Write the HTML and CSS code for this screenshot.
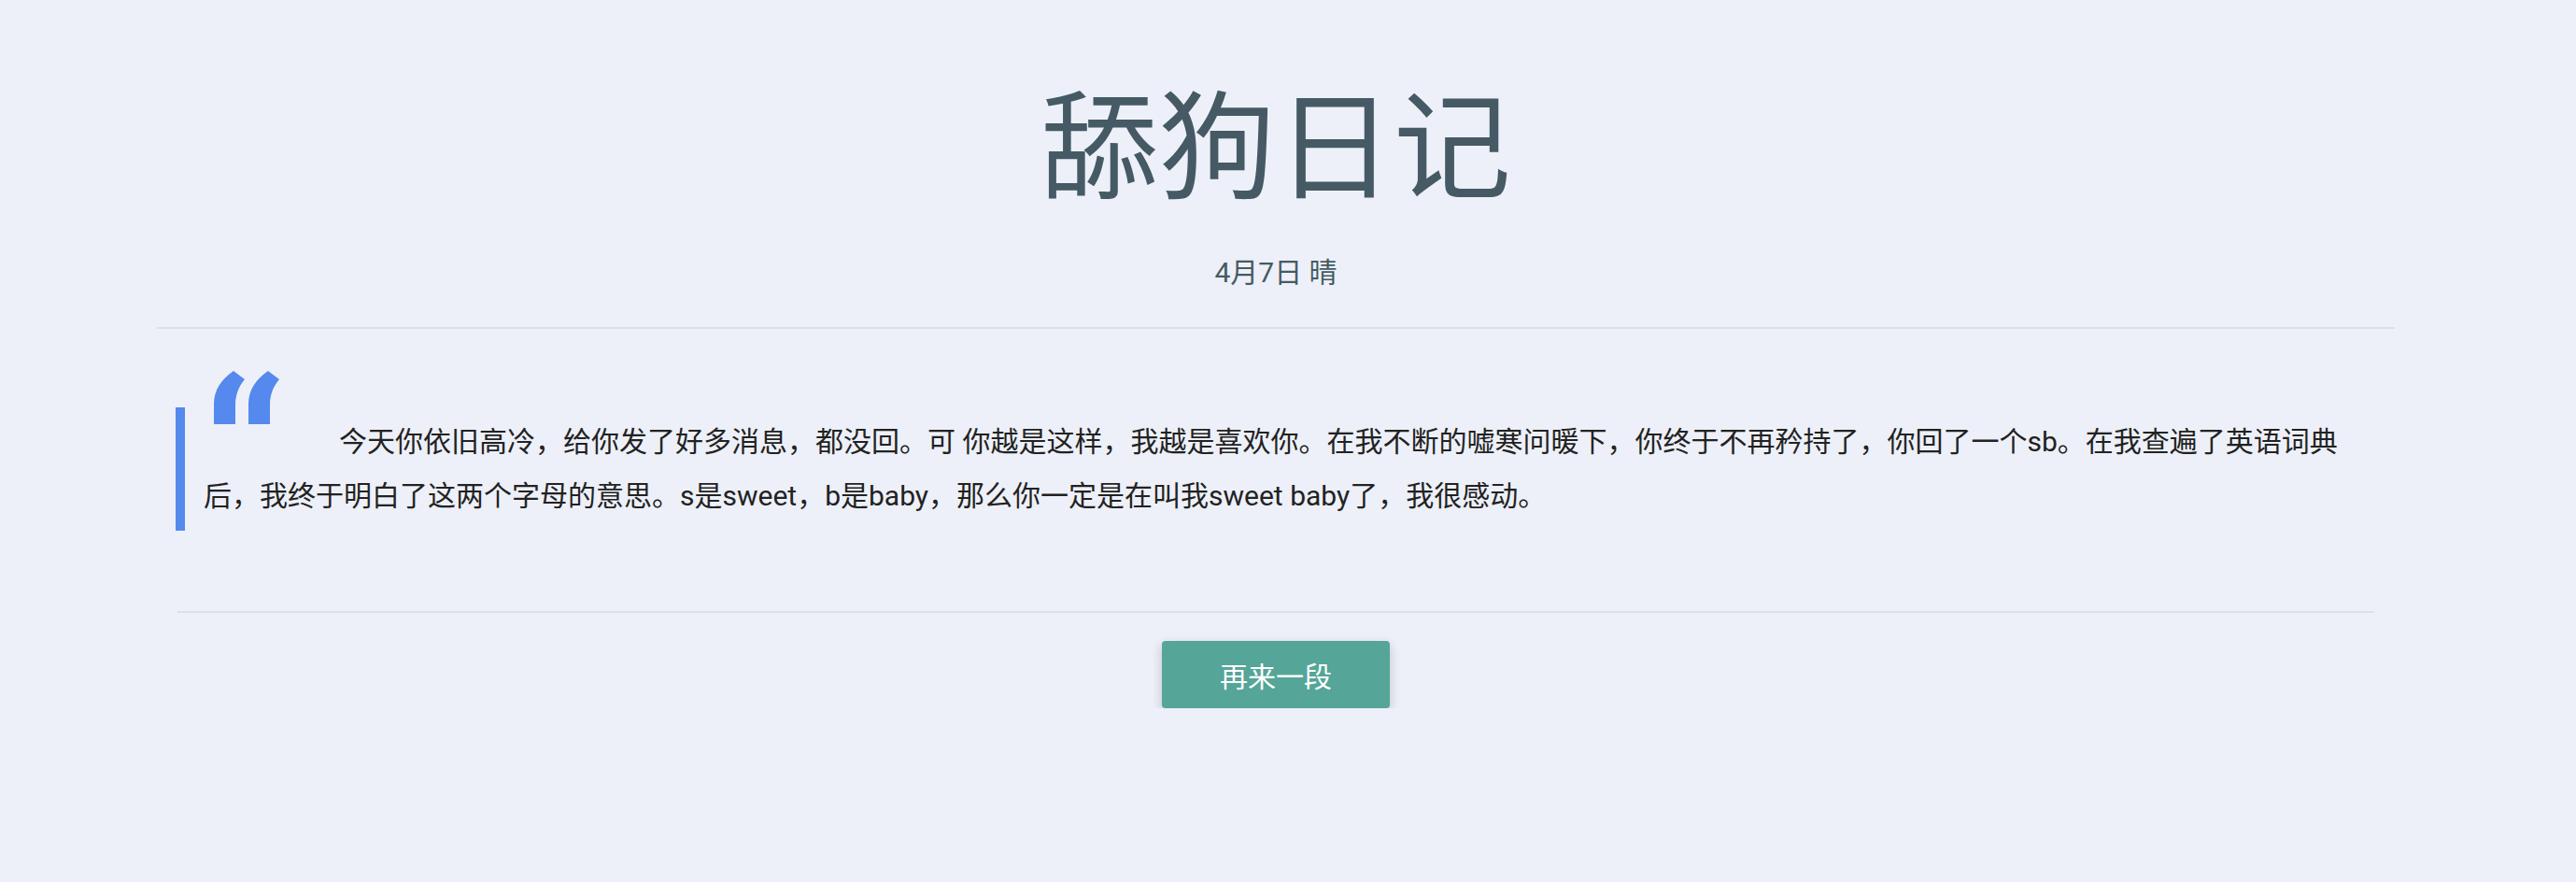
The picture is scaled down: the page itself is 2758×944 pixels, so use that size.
FILE: index.html
```html
<!DOCTYPE html>
<html lang="zh-CN">
<head>
    <meta charset="UTF-8">
    <meta name="viewport" content="width=device-width, initial-scale=1.0">
    <title>舔狗日记</title>
    <link rel="stylesheet" href="styles.css">
</head>
<body>
    <div class="page">
        <h1 class="title">舔狗日记</h1>
        <p class="date">4月7日 晴</p>
        <hr class="line-top">

        <div class="diary">
            <blockquote class="quote">
                <svg class="quote-mark" width="70" height="57" viewBox="0 0 70 57">
                    <path d="M21 0 C8 9 0 20 0 36 L0 57 L23 57 L23 36 C23 25 27 16 33 9 Z" fill="#5589ee"/>
                    <path d="M58 0 C45 9 37 20 37 36 L37 57 L60 57 L60 36 C60 25 64 16 70 9 Z" fill="#5589ee"/>
                </svg>
                <p class="text">今天你依旧高冷，给你发了好多消息，都没回。可 你越是这样，我越是喜欢你。在我不断的嘘寒问暖下，你终于不再矜持了，你回了一个sb。在我查遍了英语词典后，我终于明白了这两个字母的意思。s是sweet，b是baby，那么你一定是在叫我sweet baby了，我很感动。</p>
            </blockquote>
            <hr class="line-bottom">
            <div class="actions">
                <button class="btn">再来一段</button>
            </div>
        </div>
    </div>
</body>
</html>
```

FILE: styles.css
```css
body {
    margin: 0;
    padding: 0 26px 0 0;
    background-color: #edf0f8;
    font-family: Roboto, "Noto Sans CJK SC", sans-serif;
}
.page {
    width: 2396px;
    margin: 0 auto;
    padding-top: 97px;
}
.title {
    margin: 0;
    font-size: 126px;
    font-weight: normal;
    line-height: 1;
    text-align: center;
    color: #455a64;
}
.date {
    margin: 48px 0 0;
    font-size: 30px;
    line-height: 42px;
    text-align: center;
    color: #455a64;
}
.line-top {
    margin: 37px 0 0;
    border: none;
    border-top: 2px solid #e0e0e2;
}
.diary {
    padding: 0 22px;
}
.quote {
    position: relative;
    margin: 84px 0 0 -2px;
    padding: 8px 20px 8px 20px;
    border-left: 10px solid #5589ee;
}
.quote-mark {
    position: absolute;
    left: 31px;
    top: -39px;
}
.text {
    margin: 0;
    font-size: 30px;
    line-height: 58px;
    text-indent: 145px;
    color: #222;
}
.line-bottom {
    margin: 86px 0 0;
    border: none;
    border-top: 2px solid #e0e0e2;
}
.actions {
    display: flex;
    justify-content: center;
    padding-top: 30px;
}
.btn {
    width: 244px;
    height: 72px;
    border: none;
    border-radius: 4px;
    background-color: #55a598;
    color: #fff;
    font-family: Roboto, "Noto Sans CJK SC", sans-serif;
    font-size: 30px;
    box-shadow: 0 4px 12px rgba(0, 0, 0, 0.2);
    cursor: pointer;
}
```
